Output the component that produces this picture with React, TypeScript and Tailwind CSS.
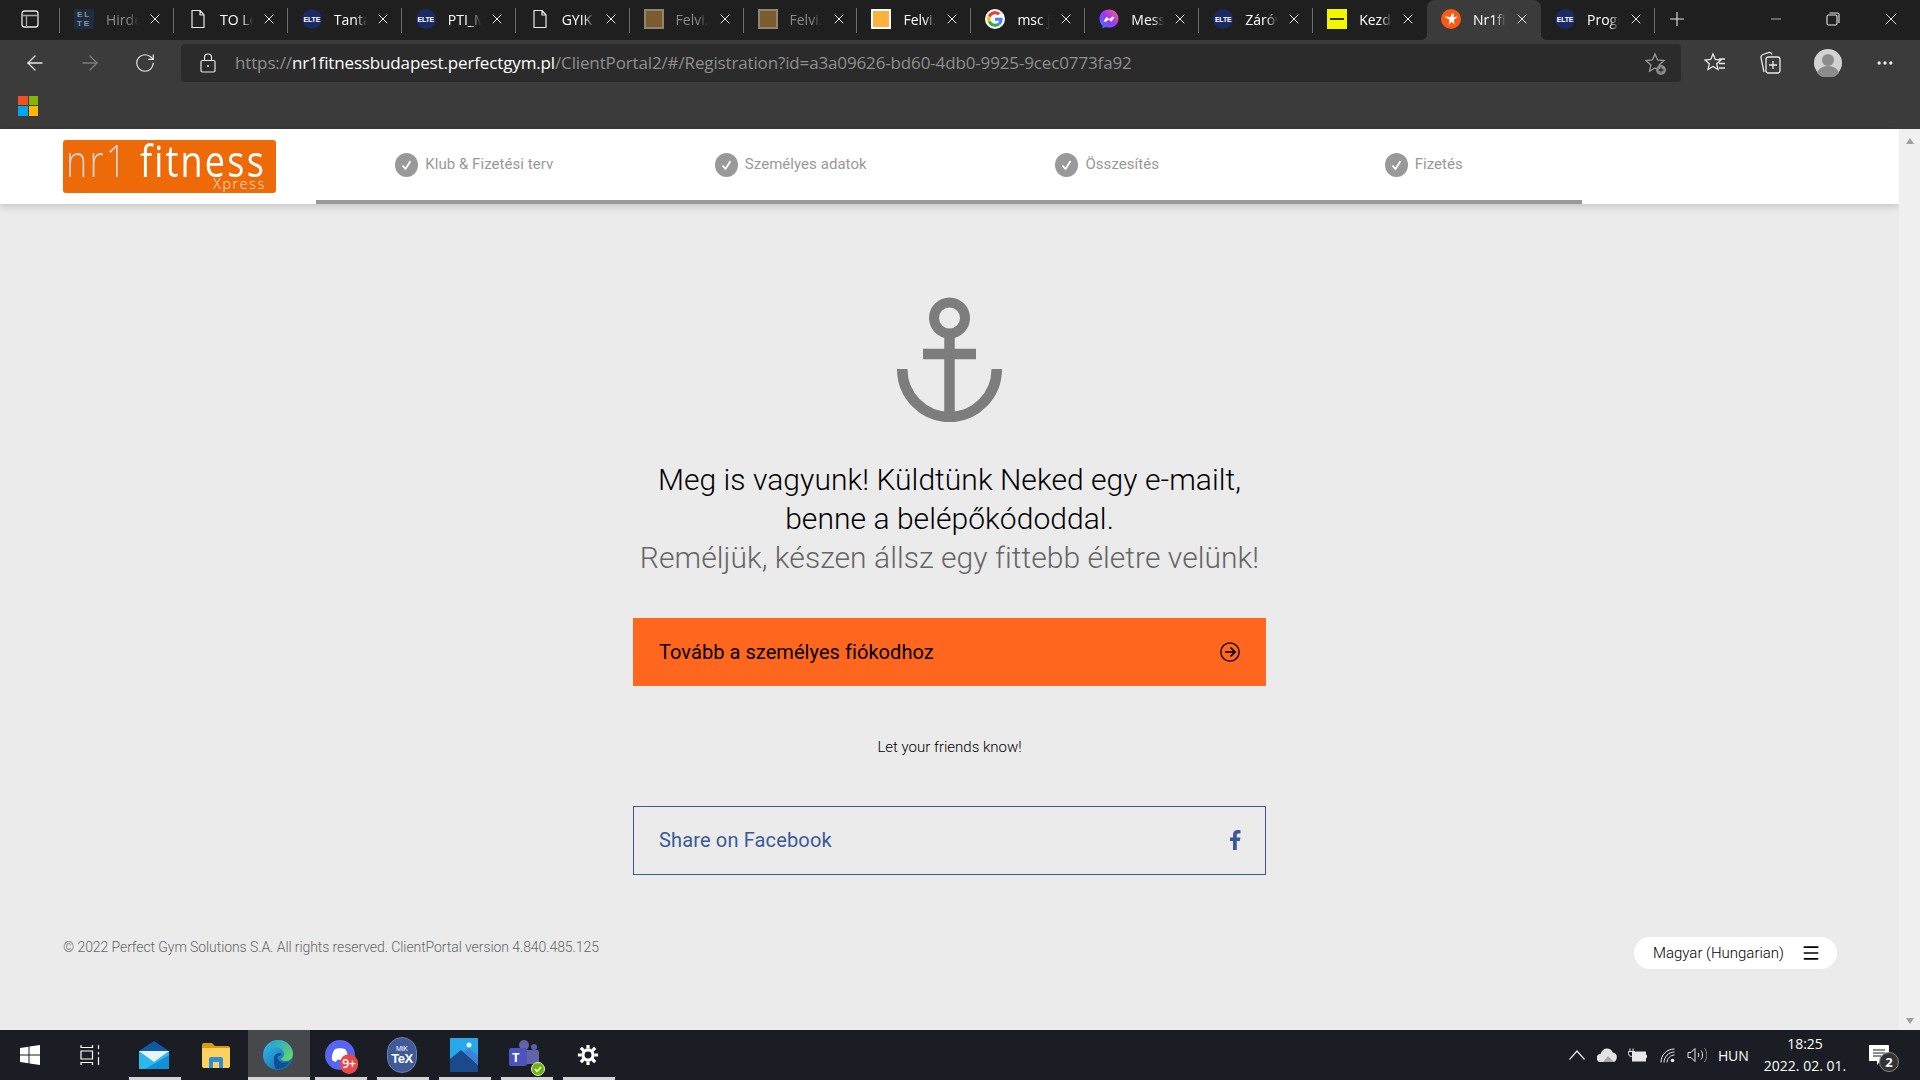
import React from "react";
import { ArrowLeft, ArrowRight, RotateCw, X, Plus, Minus, Ellipsis, Menu } from "lucide-react";

const Elte = () => (
  <div className="w-5 h-5 rounded-full bg-[#1b2a63] flex items-center justify-center text-white text-[7px] font-bold font-['Liberation_Sans',sans-serif] leading-none tracking-tight">ELTE</div>
);
const Doc = () => (
  <svg width="20" height="20" viewBox="0 0 20 20" fill="none" stroke="#e8e8e8" strokeWidth="1.2"><path d="M4 1.5h8l4 4.5v12.5H4zM12 1.5V6h4" strokeLinejoin="round" /></svg>
);
const Square = ({ c, b }: { c: string; b: string }) => (
  <div className={`w-5 h-5 border-2 ${c} ${b}`} />
);
const ElteTile = () => (
  <div className="w-5 h-5 bg-[#1d2c3f] text-[#8a97a6] text-[8px] leading-[9px] font-bold text-center font-['Liberation_Sans',sans-serif] tracking-[2px] pt-px">EL<br />TE</div>
);
const Google = () => (
  <svg width="20" height="20" viewBox="0 0 48 48" className="rounded-full bg-white p-0.5">
    <path fill="#EA4335" d="M24 9.5c3.5 0 6.7 1.2 9.2 3.6l6.9-6.9C35.9 2.4 30.5 0 24 0 14.6 0 6.5 5.4 2.6 13.2l8 6.2C12.5 13.7 17.8 9.5 24 9.5z" />
    <path fill="#4285F4" d="M46.9 24.5c0-1.6-.1-3.1-.4-4.5H24v9h12.9c-.6 3-2.2 5.5-4.700 7.200l7.700 6c4.500-4.200 7-10.300 7-17.700z" />
    <path fill="#FBBC05" d="M10.500 28.600C10 27.200 9.800 25.600 9.800 24s.3-3.200.8-4.600l-8-6.200C.9 16.500 0 20.100 0 24s.9 7.500 2.600 10.800l7.900-6.200z" />
    <path fill="#34A853" d="M24 48c6.500 0 11.900-2.100 15.900-5.800l-7.700-6c-2.200 1.500-5 2.300-8.200 2.300-6.300 0-11.500-4.200-13.500-9.900l-7.900 6.200C6.500 42.600 14.600 48 24 48z" />
  </svg>
);
const Messenger = () => (
  <svg width="20" height="20" viewBox="0 0 20 20">
    <defs><linearGradient id="ms" x1="0" y1="1" x2="1" y2="0"><stop offset="0" stopColor="#2f7bff" /><stop offset=".5" stopColor="#a033ff" /><stop offset="1" stopColor="#ff6a68" /></linearGradient></defs>
    <path fill="url(#ms)" d="M10 .5C4.600.5.500 4.400.500 9.700c0 2.800 1.100 5.200 3 6.800v3l2.900-1.500c1.100.4 2.300.6 3.600.6 5.400 0 9.500-3.900 9.500-8.900S15.400.5 10 .5z" />
    <path fill="#fff" d="M4.500 12.500l3-4.700 2.700 2.100 3-2.200 2.300.3-3 4.700-2.700-2.100-3 2.200z" />
  </svg>
);
const Nr1 = () => (
  <svg width="20" height="20" viewBox="0 0 20 20">
    <circle cx="10" cy="10" r="10" fill="#fb5a14" />
    <path fill="#fff" d="M3.500 7.500l6 .5 1.500-3.500 2 .5-.7 3 4.700-.3-4.200 3 .7 5-2.800-3-3.200 3.300 1.200-5z" />
  </svg>
);

const tabs: { icon: React.ReactNode; label: string; dim?: boolean; active?: boolean }[] = [
  { icon: <ElteTile />, label: "Hirdetmények", dim: true },
  { icon: <Doc />, label: "TO Lezárás" },
  { icon: <Elte />, label: "Tantárgyak" },
  { icon: <Elte />, label: "PTI_MSc" },
  { icon: <Doc />, label: "GYIK" },
  { icon: <Square c="bg-[#7c5c2e]" b="border-[#8d8474]" />, label: "Felvi.hu", dim: true },
  { icon: <Square c="bg-[#7c5c2e]" b="border-[#8d8474]" />, label: "Felvi.hu", dim: true },
  { icon: <Square c="bg-[#ffb03f]" b="border-white" />, label: "Felvi.hu" },
  { icon: <Google />, label: "msc jelentkezés" },
  { icon: <Messenger />, label: "Messenger" },
  { icon: <Elte />, label: "Záróvizsga" },
  { icon: <div className="w-5 h-5 bg-[#f2f700] flex items-center justify-center"><div className="w-3.5 h-0.5 bg-[#333]" /></div>, label: "Kezdőlap" },
  { icon: <Nr1 />, label: "Nr1fitness", active: true },
  { icon: <Elte />, label: "Programok" },
];

function Tab({ t, i }: { t: (typeof tabs)[number]; i: number }) {
  const prevActive = tabs[i - 1]?.active;
  const nextActive = tabs[i + 1]?.active;
  const inner = (
    <>
      <div className="ml-[14px] w-5 h-5 shrink-0 flex items-center justify-center">{t.icon}</div>
      <div className={`ml-3 w-[33px] overflow-hidden whitespace-nowrap text-[14px] [mask-image:linear-gradient(to_right,black_65%,transparent)] ${t.dim ? "text-[#8a8a8a]" : "text-white"}`}>{t.label}</div>
      <X size={16} strokeWidth={1.5} className="ml-2 shrink-0 text-[#e8e8e8]" />
    </>
  );
  if (t.active) {
    return (
      <div className="flex-1 bg-[#1f1f1f]">
        <div className="h-full bg-[#3b3b3b] rounded-t-lg flex items-center pb-0.5">{inner}</div>
      </div>
    );
  }
  return (
    <div className={`flex-1 bg-[#1f1f1f] flex items-center pb-0.5 ${nextActive ? "rounded-br-md" : ""} ${prevActive ? "rounded-bl-md" : ""}`}>
      {inner}
      <div className="flex-1" />
      <div className={`w-px h-[25px] mt-0.5 ${nextActive ? "bg-transparent" : "bg-[#6d6d6d]"}`} />
    </div>
  );
}

function Step({ label }: { label: string }) {
  return (
    <div className="flex items-center justify-center gap-[7px]">
      <svg width="23" height="24" viewBox="0 0 23 24">
        <ellipse cx="11.500" cy="12" rx="11.500" ry="12" fill="#999999" />
        <path d="M7.500 12.500l3 3.500 5-8" fill="none" stroke="#fff" strokeWidth="1.800" />
      </svg>
      <span className="text-[15px] text-[#999999] tracking-[0.05px]">{label}</span>
    </div>
  );
}

const Under = () => <div className="absolute bottom-0 left-[5px] right-[5px] h-[3px] bg-[#d4d4d4]" />;

function Cell({ children, under, active }: { children?: React.ReactNode; under?: boolean; active?: boolean }) {
  return (
    <div className={`relative w-[62px] h-full flex items-center justify-center pr-0.5 ${active ? "bg-[#47484c]" : ""}`}>
      {children}
      {under && <Under />}
      {active && <div className="absolute bottom-0 left-0 right-0 h-[3px] bg-[#d4d4d4]" />}
    </div>
  );
}

export default function App() {
  return (
    <div className="w-[1920px] h-[1080px] overflow-hidden flex flex-col bg-[#ebebeb] font-['Roboto',sans-serif]">
      {/* browser chrome */}
      <div className="h-[129px] shrink-0 bg-[#3b3b3b] flex flex-col font-['Open_Sans','Noto_Sans',sans-serif]">
        <div className="h-10 flex bg-[#3b3b3b]">
          <div className="w-[60px] bg-[#1f1f1f] flex items-center pb-0.5">
            <svg className="ml-[21px]" width="18" height="18" viewBox="0 0 18 18" fill="none" stroke="#e8e8e8" strokeWidth="1.300"><rect x="1" y="1" width="16" height="16" rx="2.500" /><path d="M1 5.500h16M5.500 5.500V17" stroke="#a8a8a8" /></svg>
            <div className="flex-1" />
            <div className="w-px h-[25px] mt-0.5 bg-[#6d6d6d]" />
          </div>
          <div className="w-[1595px] flex">
            {tabs.map((t, i) => <Tab key={i} t={t} i={i} />)}
          </div>
          <div className="flex-1 bg-[#1f1f1f] flex items-center text-[#e8e8e8] pb-0.5">
            <Plus size={22} strokeWidth={1.200} className="ml-[11px]" />
            <Minus size={16} strokeWidth={1.100} className="ml-[80px]" />
            <svg className="ml-[42px]" width="14" height="14" viewBox="0 0 14 14" fill="none" stroke="#e8e8e8" strokeWidth="1.100"><rect x="1" y="3" width="10" height="10" rx="1.500" /><path d="M3.500 1h8a1.500 1.500 0 0 1 1.500 1.500V11" /></svg>
            <X size={20} strokeWidth={1.100} className="ml-[41px]" />
          </div>
        </div>
        <div className="h-11 flex items-center">
          <ArrowLeft size={24} strokeWidth={1.300} className="ml-[23px] mt-[2px] text-[#e8e8e8]" />
          <ArrowRight size={24} strokeWidth={1.300} className="ml-[31px] mt-[2px] text-[#7d7d7d]" />
          <RotateCw size={22} strokeWidth={1.300} className="ml-[32px] mt-[2px] text-[#e8e8e8]" />
          <div className="ml-[25px] w-[1500px] h-[38px] mt-[2px] bg-[#2b2b2b] rounded-[4px] flex items-center">
            <svg className="ml-[19px]" width="16" height="20" viewBox="0 0 16 20" fill="none" stroke="#e8e8e8" strokeWidth="1.200"><rect x="1" y="7.500" width="14" height="11.500" rx="1.500" /><path d="M4.500 7.500V4.500a3.500 3.500 0 0 1 7 0v3" /><circle cx="8" cy="13" r="1" fill="#e8e8e8" stroke="none" /></svg>
            <div className="ml-[19px] text-[17px] tracking-[-0.14px] whitespace-nowrap text-[#8f8f8f]">
              https://<span className="text-white">nr1fitnessbudapest.perfectgym.pl</span>/ClientPortal2/#/Registration?id=a3a09626-bd60-4db0-9925-9cec0773fa92
            </div>
            <div className="flex-1" />
            <svg className="mr-[14px] mt-[2px]" width="22" height="24" viewBox="0 0 22 24" fill="none" stroke="#9a9a9a" strokeWidth="1.300">
              <path d="M10 2l2.600 6 6.400.6-4.800 4.300 1.300 6.300L10 16l-5.500 3.200 1.400-6.300L1 8.600 7.400 8z" />
              <circle cx="16" cy="18" r="5" fill="#8a8a8a" stroke="none" />
              <path d="M16 15.500v5M13.500 18h5" stroke="#2b2b2b" />
            </svg>
          </div>
          <svg className="ml-[23px] mt-[2px]" width="22" height="24" viewBox="0 0 22 24" fill="none" stroke="#e8e8e8" strokeWidth="1.300"><path d="M9 3l2.300 5.500 5.700.5-4.300 3.800 1.300 5.700-5-3-5 3 1.300-5.700L1 9l5.700-.5zM15 8h6M15 12.500h6M15 17h6" /></svg>
          <svg className="ml-[33px] mt-[2px]" width="22" height="26" viewBox="0 0 22 26" fill="none" stroke="#e8e8e8" strokeWidth="1.300"><path d="M5 22l-3-14c-.3-2 .5-3 2-3.500l6-2c1.500-.3 2.500.3 3 2" /><rect x="7" y="7" width="14" height="16" rx="2.500" /><path d="M14 11v8M10 15h8" /></svg>
          <svg className="ml-[33px] mt-[2px]" width="28" height="28" viewBox="0 0 28 28"><ellipse cx="14" cy="14" rx="14" ry="14" fill="#d2d2d2" /><circle cx="14" cy="11" r="6" fill="#8c8c8c" /><path d="M3 24c2-5 6-7 11-7s9 2 11 7a14 14 0 0 1-22 0z" fill="#8c8c8c" /></svg>
          <Ellipsis size={20} strokeWidth={2} className="ml-[33px] mt-[2px] text-[#e8e8e8]" />
        </div>
        <div className="flex-1 flex items-center pl-[18px] pb-[2px]">
          <div className="grid grid-cols-2 gap-[1px] w-5 h-5">
            <div className="bg-[#f25022]" /><div className="bg-[#7fba00]" /><div className="bg-[#00a4ef]" /><div className="bg-[#ffb900]" />
          </div>
        </div>
      </div>

      {/* page */}
      <div className="h-[901px] shrink-0 flex bg-[#ebebeb]">
        <div className="flex-1 flex flex-col">
          <div className="h-[75px] shrink-0 bg-white flex shadow-[0_2px_8px_rgba(0,0,0,0.18)]">
            <div className="w-[316px] shrink-0 pl-[63px] pt-[11px]">
              <div className="w-[213px] h-[53px] overflow-hidden bg-[#ee6a08] rounded-[3px] flex flex-col items-end pr-[10px] pt-[4px] font-['Open_Sans',sans-serif] text-white leading-none">
                <div className="h-[33px] text-[36px] font-normal leading-[33px] tracking-[2.200px] whitespace-nowrap scale-y-[1.22]"><span className="text-[#d2d2d2] font-light">nr1</span> fitness</div>
                <div className="h-[14px] text-[14px] font-light leading-[14px] tracking-[1.800px] text-[#f5e6da]">Xpress</div>
              </div>
            </div>
            <div className="w-[1266px] shrink-0 grid grid-cols-4 border-b-4 border-[#999999] items-center">
              <Step label="Klub & Fizetési terv" />
              <Step label="Személyes adatok" />
              <Step label="Összesítés" />
              <Step label="Fizetés" />
            </div>
          </div>
          <div className="flex flex-col items-center pt-[93px]">
            <svg width="105" height="125" viewBox="0 0 105 125" fill="none" stroke="#7d7d7d">
              <circle cx="52.500" cy="21" r="15.500" strokeWidth="10" />
              <path d="M52.500 36v84M26 57h53" strokeWidth="10.500" />
              <path d="M5.250 72A47.250 48 0 0 0 99.750 72" strokeWidth="10.500" />
            </svg>
            <h1 className="mt-[38px] text-[30px] leading-[39px] font-light tracking-[0.05px] text-black text-center">
              Meg is vagyunk! Küldtünk Neked egy e-mailt,<br />benne a belépőkódoddal.<br /><span className="text-[#666666]">Reméljük, készen állsz egy fittebb életre velünk!</span>
            </h1>
            <button className="mt-[41px] w-[633px] h-[68px] bg-[#ff671f] flex items-center justify-between pl-[26px] pr-[26px] text-[20px] font-[450] tracking-[0.06px] text-black">
              <span>Tovább a személyes fiókodhoz</span>
              <svg width="20" height="20" viewBox="0 0 20 20" fill="none" stroke="#000" strokeWidth="1.300"><circle cx="10" cy="10" r="9.200" /><path d="M5 10h10M10.500 5.500L15 10l-4.500 4.500" strokeWidth="1.700" /></svg>
            </button>
            <p className="mt-[51px] text-[15px] leading-5 font-light text-black">Let your friends know!</p>
            <button className="mt-[49px] w-[633px] h-[69px] border border-[#3b5998] flex items-center justify-between pl-[25px] pr-[24px] pb-[2px] text-[20px] tracking-[0.15px] text-[#3b5998]">
              <span>Share on Facebook</span>
              <svg width="11" height="20" viewBox="0 0 11 20" fill="#3b5998"><path d="M3 20v-9H0V7.500h3V5c0-3.200 1.900-5 4.700-5 1.300 0 2.500.1 2.800.2v3.200H8.600C7.100 3.400 6.800 4.100 6.800 5.200v2.300h3.600l-.5 3.500H6.800v9z" /></svg>
            </button>
            <div className="mt-[62px] w-full flex justify-between items-start pl-[63px] pr-[62px]">
              <span className="text-[14px] leading-5 font-light tracking-[-0.08px] text-[#666666]">© 2022 Perfect Gym Solutions S.A. All rights reserved. ClientPortal version 4.840.485.125</span>
              <div className="w-[203px] h-8 bg-white rounded-full flex items-center pl-[19px] text-[15px] font-light text-black">
                <span className="whitespace-nowrap">Magyar (Hungarian)</span>
                <Menu size={20} strokeWidth={2} className="ml-[17px] text-black" />
              </div>
            </div>
          </div>
        </div>
        <div className="w-[21px] shrink-0 bg-[#f0f0f0] flex flex-col items-center justify-between pt-[9px] pb-[6px] z-10">
          <div className="w-0 h-0 border-x-[4px] border-x-transparent border-b-[6px] border-b-[#a0a0a0]" />
          <div className="w-0 h-0 border-x-[4px] border-x-transparent border-t-[6px] border-t-[#a0a0a0]" />
        </div>
      </div>

      {/* taskbar */}
      <div className="h-[50px] shrink-0 bg-[#1a1d24] flex items-center text-white font-['Open_Sans','Noto_Sans',sans-serif]">
        <Cell>
          <svg width="20" height="20" viewBox="0 0 20 20" fill="#fff"><path d="M0 3l8.500-1.300v7.800H0zM9.500 1.500L20 0v9.500H9.500zM0 10.500h8.500v7.800L0 17zM9.500 10.500H20V20L9.500 18.500z" /></svg>
        </Cell>
        <Cell>
          <svg width="20" height="20" viewBox="0 0 20 20" fill="none" stroke="#fff" strokeWidth="1.200" className="-ml-1"><path d="M1 0v2.500h11.500V0M1 6h11.500v8H1zM1 20v-2.500h11.500V20M18.500 0v4M18.500 7v2.500M18.500 12v8" /></svg>
        </Cell>
        <Cell under>
          <svg width="30" height="28" viewBox="0 0 30 28"><path d="M15 0L30 10v18H0V10z" fill="#0f5aa8" /><path d="M0 10h30v18H0z" fill="#2bb8f0" /><path d="M0 10l15 11L30 10z" fill="#e8f4fb" /><path d="M30 28H6l24-14z" fill="#1490d8" /></svg>
        </Cell>
        <Cell>
          <svg width="28" height="25" viewBox="0 0 28 25"><path d="M0 2a2 2 0 0 1 2-2h8l3 3h13a2 2 0 0 1 2 2v3H0z" fill="#d99a0c" /><path d="M0 5h28v18a2 2 0 0 1-2 2H2a2 2 0 0 1-2-2z" fill="#fbd160" /><path d="M7 25v-9a2 2 0 0 1 2-2h10a2 2 0 0 1 2 2v9h-4v-6h-6v6z" fill="#2f8ed8" /></svg>
        </Cell>
        <Cell active>
          <svg width="30" height="30" viewBox="0 0 30 30">
            <defs><linearGradient id="ed" x1="0" y1="0" x2="1" y2="1"><stop offset="0" stopColor="#35c1f1" /><stop offset="1" stopColor="#0c59a4" /></linearGradient><linearGradient id="eg" x1="0" y1="0" x2="1" y2="1"><stop offset="0" stopColor="#1b9de2" /><stop offset="1" stopColor="#6fdc5a" /></linearGradient></defs>
            <circle cx="15" cy="15" r="15" fill="url(#ed)" />
            <path d="M4 8C7 2 12 0 15 0c9 0 15 7 15 14 0 4-3 7-7 7-3 0-5-1-5-2 1-1 3-2 3-5 0-4-4-7-9-7-3 0-6 0-8 1z" fill="url(#eg)" />
            <path d="M11 18c0-3 3-5 6-5 2 0 1 3-1 3-1 0-2 1-1 3 1 3 6 5 11 3-3 5-8 7-12 7-3 0-3-8-3-11z" fill="#0f4e96" />
          </svg>
        </Cell>
        <Cell under>
          <div className="relative">
            <svg width="30" height="30" viewBox="0 0 30 30"><circle cx="15" cy="15" r="15" fill="#5865f2" /><path d="M7 20c-.5-4 .5-8 3-11l3.500-.8h3L20 9c2.500 3 3.500 7 3 11-2 1.500-3.500 1.800-4 1.800l-1.200-2h-5.600l-1.200 2c-.5 0-2-.3-4-1.800z" fill="#fff" /></svg>
            <div className="absolute -right-[3px] -bottom-[4px] w-[18px] h-[20px] rounded-full bg-[#e8484a] text-[12px] font-semibold leading-[20px] text-center">9+</div>
          </div>
        </Cell>
        <Cell under>
          <div className="w-[30px] h-[36px] rounded-full bg-[#3f5a96] border border-[#6a7fb0] flex flex-col items-center justify-center text-white leading-none font-['Liberation_Sans',sans-serif]">
            <span className="text-[7px]">MiK</span>
            <span className="text-[13px] font-bold tracking-[-0.5px]">TeX</span>
          </div>
        </Cell>
        <Cell under>
          <svg width="28" height="34" viewBox="0 0 28 34"><rect width="28" height="34" rx="1" fill="#28a8e8" /><circle cx="19" cy="7" r="2.500" fill="#e8f4fb" /><path d="M0 34V21l11-9 17 15v7z" fill="#1a4a8c" /><path d="M14 14l5-4 9 8v9z" fill="#3f7fd8" /></svg>
        </Cell>
        <Cell under>
          <div className="relative -ml-1">
            <svg width="30" height="32" viewBox="0 0 30 32"><circle cx="15" cy="6" r="5" fill="#6264a7" /><circle cx="25" cy="8" r="3" fill="#5a5fb0" /><rect x="10" y="11" width="20" height="14" rx="2" fill="#6264a7" /><rect x="0" y="9" width="18" height="18" rx="2" fill="#4b53bc" /></svg>
            <span className="absolute left-[3px] top-[9px] text-[13px] font-bold leading-[18px]">T</span>
            <svg className="absolute -right-[6px] -bottom-[5px]" width="14" height="14" viewBox="0 0 14 14"><circle cx="7" cy="7" r="6.500" fill="#6bb700" stroke="#e8e8e8" /><path d="M4 7l2.200 2.300L10 5" stroke="#fff" strokeWidth="1.500" fill="none" /></svg>
          </div>
        </Cell>
        <Cell under>
          <svg width="22" height="24" viewBox="0 0 24 24" fill="none" stroke="#fff" strokeWidth="3.500"><circle cx="12" cy="12" r="5.500" /><path d="M12 1v4M12 19v4M1 12h4M19 12h4M4.200 4.200l2.900 2.900M16.900 16.900l2.900 2.900M4.200 19.800l2.900-2.900M16.900 7.100l2.900-2.900" /></svg>
        </Cell>
        <div className="ml-auto flex items-center pr-[31px]">
          <svg width="16" height="10" viewBox="0 0 16 10" fill="none" stroke="#e8e8e8" strokeWidth="1.200" className="mr-[12px]"><path d="M.5 9.500L8 1l7.500 8.500" /></svg>
          <svg width="20" height="14" viewBox="0 0 20 14" className="mr-[10px]"><path fill="#e4e4e4" d="M4 14a4 4 0 0 1-.5-8C4.500 2.500 7 .5 10 .5c2.700 0 4.800 1.500 5.800 4a4.800 4.800 0 0 1-.3 9.500z" /><path fill="#a8a8a8" d="M6 14l5-6 6 6z" /></svg>
          <svg width="20" height="14" viewBox="0 0 20 14" fill="none" stroke="#e8e8e8" className="mr-[13px]"><path d="M3 .5v3M6 .5v3M1.500 3.500h6v2a3 3 0 0 1-6 0z" /><rect x="5.500" y="4" width="13" height="9" fill="#e8e8e8" /><path d="M19.500 7v3" /></svg>
          <svg width="15" height="15" viewBox="0 0 15 15" fill="none" stroke="#e8e8e8" strokeWidth="1" className="mr-[12px]"><path d="M1 14.500C1 7 6.500 1 14.500 1M4 14.500C4 9 8.500 4 14.500 4M7 14.500c0-4 3.500-7.500 7.500-7.500" /><circle cx="12.500" cy="12.500" r="1.800" fill="#e8e8e8" stroke="none" /></svg>
          <svg width="20" height="16" viewBox="0 0 20 16" fill="none" stroke="#e8e8e8" strokeWidth="1" className="mr-[11px]"><path d="M1 5.500h3L8 1.500v13l-4-4H1zM11 6c1 1.200 1 2.800 0 4M14 3.500c2 2.500 2 6.500 0 9" /><path d="M17.500 1c3 4 3 10 0 14" stroke="#888" /></svg>
          <span className="text-[14px] w-[32px] whitespace-nowrap tracking-[-0.2px]">HUN</span>
          <div className="w-[84px] ml-[14px] text-center text-[14px] leading-[22px] whitespace-nowrap -translate-x-px">18:25<br />2022. 02. 01.</div>
          <div className="relative ml-[21px]">
            <svg width="20" height="20" viewBox="0 0 20 20" fill="#fff"><path d="M0 0h20v16H11l-3 4v-4H0z" /><path d="M4 5h12M4 8h12M4 11h8" stroke="#1a1d24" /></svg>
            <div className="absolute -right-[10px] -bottom-[7px] w-5 h-5 rounded-full bg-[#333] border border-[#888] text-[13px] font-bold leading-[18px] text-center">2</div>
          </div>
        </div>
      </div>
    </div>
  );
}
